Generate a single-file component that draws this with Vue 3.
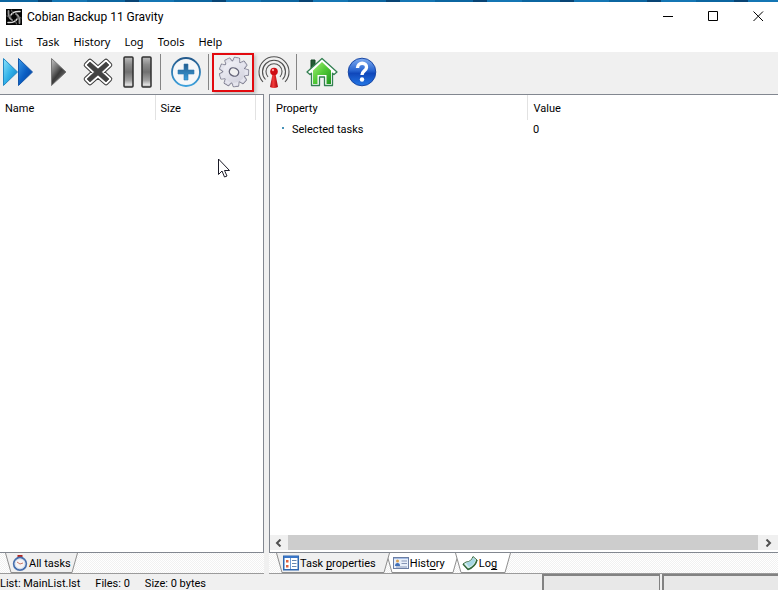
<script setup>
import { ref } from 'vue'

const menus = ['List', 'Task', 'History', 'Log', 'Tools', 'Help']
const detailTab = ref('properties')
const status = ['List: MainList.lst', 'Files: 0', 'Size: 0 bytes']
const gearTeeth = [0, 40, 80, 120, 160, 200, 240, 280, 320]
</script>

<template>
  <main class="window">
    <div class="desktop-edge"></div>
    <header class="titlebar">
      <svg class="app-icon" viewBox="0 0 16 16" aria-hidden="true">
        <rect width="16" height="16" fill="#050505" />
        <g fill="none" stroke-linecap="round">
          <path d="M5 6Q7 2 14 2.500" stroke="#ddd" stroke-width="1.600" />
          <path d="M10 5Q14 7 13.500 14" stroke="#999" stroke-width="1.800" />
          <path d="M11 10Q9 14 2 13.500" stroke="#ddd" stroke-width="1.600" />
          <path d="M6 11Q2 9 2.500 2" stroke="#999" stroke-width="1.800" />
          <path d="M7 5L5.500 1M11 8L15 9M9 11L10.500 15M5 8L1 7" stroke="#777" />
        </g>
      </svg>
      <h1>Cobian Backup 11 Gravity</h1>
      <div class="window-controls">
        <button aria-label="Minimize"><svg viewBox="0 0 12 12"><path d="M1 5.500H11" /></svg></button>
        <button aria-label="Maximize"><svg viewBox="0 0 12 12"><path d="M1.5 .500H10.500V9.500H1.500Z" /></svg></button>
        <button aria-label="Close"><svg viewBox="0 0 12 12"><path d="M1.500 .500L11 10M11 .500L1.500 10" /></svg></button>
      </div>
    </header>

    <nav class="menubar">
      <button v-for="m in menus" :key="m">{{ m }}</button>
    </nav>

    <div class="toolbar" role="toolbar">
      <button class="first" aria-label="Run all tasks">
        <svg viewBox="0 0 32 32">
          <defs>
            <linearGradient id="ffa" x1="0" y1="0" x2="1" y2="1"><stop offset="0" stop-color="#8ce2fb" /><stop offset=".5" stop-color="#31b1e8" /><stop offset="1" stop-color="#0878c0" /></linearGradient>
            <linearGradient id="ffb" x1="0" y1="0" x2="1" y2="1"><stop offset="0" stop-color="#3b9be8" /><stop offset=".5" stop-color="#0b5fc4" /><stop offset="1" stop-color="#063a94" /></linearGradient>
          </defs>
          <path d="M.5 2.500L14.500 16L.5 29.500Z" fill="url(#ffa)" stroke="#2288c4" />
          <path d="M15.500 2.500L29.500 16L15.500 29.500Z" fill="url(#ffb)" stroke="#1557a8" />
        </svg>
      </button>
      <button aria-label="Run selected tasks">
        <svg viewBox="0 0 32 32">
          <defs><linearGradient id="play" x1="0" y1="0" x2=".7" y2="1"><stop offset="0" stop-color="#c8c8c8" /><stop offset=".4" stop-color="#6f6f6f" /><stop offset=".6" stop-color="#3b3b3b" /><stop offset="1" stop-color="#777" /></linearGradient></defs>
          <path d="M9.500 2.500L24 16L9.500 29.500Z" fill="url(#play)" stroke="#777" />
        </svg>
      </button>
      <button aria-label="Abort">
        <svg viewBox="0 0 32 32" fill="none" stroke-linejoin="round">
          <path d="M8 5L16 12L24 5L28 9L20.500 16L28 23L24 27L16 20L8 27L4 23L11.500 16L4 9Z" fill="#3c3c3c" stroke="#3c3c3c" stroke-width="4.600" />
          <path d="M8 5L16 12L24 5L28 9L20.500 16L28 23L24 27L16 20L8 27L4 23L11.500 16L4 9Z" fill="#fff" stroke="#fff" stroke-width="2.600" />
          <path d="M8 6L16 13L24 6L27 9L19.500 16L27 23L24 26L16 19L8 26L5 23L12.500 16L5 9Z" fill="#424242" stroke="#333" stroke-width=".6" />
        </svg>
      </button>
      <button aria-label="Pause">
        <svg viewBox="0 0 32 32">
          <defs><linearGradient id="pause" x1="0" y1="0" x2="0" y2="1"><stop offset="0" stop-color="#bdbdbd" /><stop offset=".25" stop-color="#8b8b8b" /><stop offset=".5" stop-color="#707070" /><stop offset=".78" stop-color="#a0a0a0" /><stop offset=".92" stop-color="#dedede" /><stop offset="1" stop-color="#aaa" /></linearGradient></defs>
          <rect x="2" y="1" width="9" height="30" rx="1" fill="url(#pause)" stroke="#303030" stroke-width="1.500" />
          <rect x="20" y="1" width="9" height="30" rx="1" fill="url(#pause)" stroke="#303030" stroke-width="1.500" />
        </svg>
      </button>
      <span class="separator"></span>
      <button aria-label="New task">
        <svg viewBox="0 0 32 32">
          <defs><linearGradient id="plus" x1="0" y1="0" x2="0" y2="1"><stop offset="0" stop-color="#245a8c" /><stop offset="1" stop-color="#3ba0dc" /></linearGradient></defs>
          <circle cx="16" cy="16" r="14" fill="#f5f7f9" stroke="url(#plus)" stroke-width="1.800" />
          <path d="M14 8H18V14H24V18H18V24H14V18H8V14H14Z" fill="url(#plus)" stroke="#2c78b4" stroke-width=".6" />
        </svg>
      </button>
      <span class="separator"></span>
      <button class="marked" aria-label="Options">
        <svg viewBox="0 0 32 32">
          <defs><linearGradient id="gear" x1="0" y1="0" x2="1" y2="1"><stop offset="0" stop-color="#f4f4fa" /><stop offset="1" stop-color="#cfcfdb" /></linearGradient></defs>
          <g transform="rotate(12 16 16)">
            <g fill="#77778a" stroke="#77778a" stroke-width="2.200" stroke-linejoin="round"><path v-for="a in gearTeeth" :key="a" :transform="`rotate(${a} 16 16)`" d="M12.800 7L13.800 2H18.200L19.200 7Z" /></g>
            <circle cx="16" cy="16" r="11.600" fill="#77778a" />
            <g fill="#e5e5ee" stroke="#e5e5ee" stroke-width=".6" stroke-linejoin="round"><path v-for="a in gearTeeth" :key="a" :transform="`rotate(${a} 16 16)`" d="M12.800 7L13.800 2H18.200L19.200 7Z" /></g>
            <circle cx="16" cy="16" r="10.800" fill="url(#gear)" />
          </g>
          <ellipse cx="16" cy="16" rx="4.800" ry="4" fill="#f1f1f1" stroke="#66667a" stroke-width="1.400" transform="rotate(25 16 16)" />
        </svg>
      </button>
      <button aria-label="Remote control">
        <svg viewBox="0 0 32 32">
          <g fill="none" stroke="#515151" stroke-width="1.100">
            <path d="M5 26A15 15 0 1 1 27 26" /><path d="M7.500 23.500A11.500 11.500 0 1 1 24.500 23.500" /><path d="M10 21A8 8 0 1 1 22 21" />
          </g>
          <defs><linearGradient id="mast"><stop offset="0" stop-color="#a80510" /><stop offset=".4" stop-color="#f43b3b" /><stop offset="1" stop-color="#a80008" /></linearGradient></defs>
          <path d="M14.500 18H17.500L20 31Q16 33 12 31Z" fill="url(#mast)" /><circle cx="16" cy="15.500" r="3.800" fill="#ce0b13" /><circle cx="15" cy="14" r="1.200" fill="#fb9696" />
        </svg>
      </button>
      <span class="separator"></span>
      <button aria-label="Home page">
        <svg viewBox="0 0 32 32">
          <defs><linearGradient id="home" x1="0" y1="0" x2="1" y2="1"><stop offset="0" stop-color="#a6ee78" /><stop offset=".5" stop-color="#51c936" /><stop offset="1" stop-color="#209621" /></linearGradient></defs>
          <path d="M5 4H9V9L5 13Z" fill="#245c35" stroke="#174727" />
          <path d="M16 2.500L31 16L28 18.500L26.500 17.200V29.500H18.500V21H13.500V29.500H5.500V17.200L4 18.500L1 16Z" fill="#fff" stroke="#338052" stroke-width="1.300" stroke-linejoin="round" />
          <path d="M16 6L25 14.500V28H20.500V19H11.500V28H7V14.500Z" fill="url(#home)" />
        </svg>
      </button>
      <button aria-label="Help">
        <svg viewBox="0 0 32 32">
          <defs><linearGradient id="help" x1="0" y1="0" x2="0" y2="1"><stop offset="0" stop-color="#7facf0" /><stop offset=".45" stop-color="#2864d0" /><stop offset=".55" stop-color="#1047ba" /><stop offset="1" stop-color="#2478e6" /></linearGradient></defs>
          <circle cx="16" cy="16" r="13.800" fill="url(#help)" stroke="#1947a4" />
          <path d="M11.500 12C11.500 5.500 21 6 20.500 11.500C20.300 14.800 16 15 16 19" fill="none" stroke="#fff" stroke-width="3.400" /><circle cx="16" cy="23.500" r="2.200" fill="#fff" />
        </svg>
      </button>
    </div>

    <div class="workspace">
      <section class="pane tasks">
        <div class="list">
          <table>
            <thead><tr><th class="name">Name</th><th class="size">Size</th><th></th></tr></thead>
          </table>
          <svg class="pointer" viewBox="0 0 12 20" aria-hidden="true"><path d="M.5 1V16.500L4 13L6.500 19L9 18L6.500 12.500H11.500Z" fill="#fff" stroke="#1b1b28" /></svg>
        </div>
        <div class="tabs" role="tablist">
          <button class="tab active" role="tab" aria-selected="true">
            <svg class="slant" viewBox="0 0 7 20"><path class="fill" d="M0 0H7V20H6Z" /><path class="line" d="M.5 0L6 19.500H7" /></svg>
            <span class="tab-label">
              <svg viewBox="0 0 16 16"><rect x="5.500" y="0" width="5" height="2.500" fill="#b52620" /><circle cx="8" cy="8.800" r="6.300" fill="#fff" stroke="#486fad" stroke-width="1.800" /><circle cx="8" cy="8.800" r="5" fill="#f7f4f4" stroke="#b9cbe5" stroke-width=".7" /><path d="M5 7L8 9L11 8" fill="none" stroke="#c87868" /></svg>
              <span>All tasks</span>
            </span>
            <svg class="slant" viewBox="0 0 7 20"><path class="fill" d="M0 0H7L1 20H0Z" /><path class="line" d="M6.500 0L1 19.500H0" /></svg>
          </button>
        </div>
      </section>

      <div class="splitter"></div>

      <section class="pane details">
        <div class="list">
          <table>
            <thead><tr><th class="property">Property</th><th>Value</th></tr></thead>
            <tbody><tr><td><span class="bullet"></span>Selected tasks</td><td>0</td></tr></tbody>
          </table>
          <div class="scrollbar">
            <button aria-label="Scroll left"><svg viewBox="0 0 8 8"><path d="M5.500 .500L2 4L5.500 7.500" /></svg></button>
            <div class="thumb"></div>
            <button aria-label="Scroll right"><svg viewBox="0 0 8 8"><path d="M2.500 .500L6 4L2.500 7.500" /></svg></button>
          </div>
        </div>
        <div class="tabs" role="tablist">
          <button class="tab" :class="{ active: detailTab === 'properties' }" role="tab" @click="detailTab = 'properties'">
            <svg class="slant" viewBox="0 0 7 20"><path class="fill" d="M0 0H7V20H6Z" /><path class="line" d="M.5 0L6 19.500H7" /></svg>
            <span class="tab-label">
              <svg viewBox="0 0 16 16"><rect x=".75" y="1.250" width="14.500" height="13.500" fill="#fff" stroke="#2e66b0" stroke-width="1.500" /><path d="M1 2H15" stroke="#3975c6" stroke-width="2" /><path d="M7.500 3V14" stroke="#6d9bd3" /><path d="M3 5H5.500V7.500H3ZM3 10H5.500V12.500H3Z" fill="#e0603c" /><path d="M9 5.500H13.500M9 8.500H13.500M9 11.500H13.500" stroke="#6888b0" /></svg>
              <span>Task <u>p</u>roperties</span>
            </span>
            <svg class="slant" viewBox="0 0 7 20"><path class="fill" d="M0 0H7L1 20H0Z" /><path class="line" d="M6.500 0L1 19.500H0" /></svg>
          </button>
          <button class="tab" :class="{ active: detailTab === 'history' }" role="tab" @click="detailTab = 'history'">
            <svg class="slant" viewBox="0 0 7 20"><path class="fill" d="M0 0H7V20H6Z" /><path class="line" d="M.5 0L6 19.500H7" /></svg>
            <span class="tab-label">
              <svg viewBox="0 0 16 16"><rect x=".5" y="2.500" width="15" height="11" fill="#e8effa" stroke="#6c7fa5" /><path d="M1 3.500H15" stroke="#a5bde6" /><circle cx="4.500" cy="6" r="1.500" fill="#dba050" /><path d="M2 11Q2 8 4.500 8T7 11Z" fill="#416fb8" /><path d="M8.500 6H14M8.500 8.500H14M3 12H14" stroke="#8796b7" /></svg>
              <span>Hist<u>o</u>ry</span>
            </span>
            <svg class="slant" viewBox="0 0 7 20"><path class="fill" d="M0 0H7L1 20H0Z" /><path class="line" d="M6.500 0L1 19.500H0" /></svg>
          </button>
          <button class="tab" :class="{ active: detailTab === 'log' }" role="tab" @click="detailTab = 'log'">
            <svg class="slant" viewBox="0 0 7 20"><path class="fill" d="M0 0H7V20H6Z" /><path class="line" d="M.5 0L6 19.500H7" /></svg>
            <span class="tab-label">
              <svg viewBox="0 0 16 16"><path d="M1 9L4 7Q9 7 11 1.500L15 5Q14 11 6 14.500Z" fill="#d7f0ee" stroke="#3e7048" stroke-linejoin="round" /><path d="M4 8Q9 7 11 3L13.500 5Q12 10 7 12Z" fill="#a6d7e4" /><path d="M1 9L6 14.500Q13 12 15 5" fill="none" stroke="#356a3c" stroke-width="1.500" /></svg>
              <span>Lo<u>g</u></span>
            </span>
            <svg class="slant" viewBox="0 0 7 20"><path class="fill" d="M0 0H7L1 20H0Z" /><path class="line" d="M6.500 0L1 19.500H0" /></svg>
          </button>
        </div>
      </section>
    </div>

    <footer class="statusbar">
      <div class="summary"><span v-for="s in status" :key="s">{{ s }}</span></div>
      <div class="progress"></div>
      <div class="progress"></div>
    </footer>
  </main>
</template>

<style>
body { margin: 0; overflow: hidden; }
</style>

<style scoped>
.window { display: flex; flex-direction: column; height: 100vh; background: #f0f0f0; color: #000; font: 11px/14px Roboto, sans-serif; cursor: default; }
button { display: flex; align-items: center; justify-content: center; padding: 0; border: 0; background: none; color: inherit; font: inherit; }
svg { display: block; flex: none; }
.desktop-edge { height: 2px; flex: none; background: repeating-linear-gradient(90deg, #0b65a0 0 38px, #084474 38px 52px, #1476b4 52px 87px); }
.titlebar { display: flex; align-items: center; height: 29px; flex: none; padding-left: 6px; background: #fff; }
.app-icon { width: 16px; height: 16px; }
h1 { flex: 1; margin: 0 0 0 5px; font: 12px/16px Roboto, sans-serif; }
.window-controls { display: flex; gap: 5px; }
.window-controls button { width: 40px; height: 29px; }
.window-controls svg { width: 12px; height: 12px; fill: none; stroke: #000; }
.menubar { display: flex; align-items: center; gap: 14px; height: 21px; flex: none; padding-left: 5px; background: #fff; font-family: "Noto Sans", sans-serif; }
.toolbar { display: flex; align-items: center; box-sizing: border-box; height: 42px; flex: none; padding-bottom: 2px; }
.toolbar button { position: relative; width: 40px; height: 40px; }
.toolbar button.first { width: 38px; }
.toolbar svg { width: 32px; height: 32px; }
.separator { box-sizing: border-box; width: 8px; height: 36px; padding-left: 2px; }
.separator::before { content: ""; display: block; width: 1px; height: 100%; background: #858585; }
.marked::after { content: ""; position: absolute; inset: 1px 0 0 -2px; border: 2px solid #e20a0f; box-shadow: 2px 2px 3px #9998; }
.workspace { display: flex; flex: 1; min-height: 0; }
.pane { display: flex; flex-direction: column; min-width: 0; }
.tasks { width: 264px; flex: none; }
.details { flex: 1; }
.splitter { width: 5px; flex: none; background: #f0f0f0; }
.list { display: flex; flex: 1; flex-direction: column; justify-content: space-between; position: relative; min-height: 0; border: solid #828790; border-width: 1px 1px 1px 0; background: #fff; }
.details .list { border-width: 1px 0 1px 1px; }
table { width: 100%; border-collapse: collapse; table-layout: fixed; }
th, td { box-sizing: border-box; padding: 2px 5px 0; text-align: left; font-weight: normal; white-space: nowrap; }
th { height: 25px; }
td { height: 18px; }
.name, .size, .property { border-right: 1px solid #e2e2e2; }
.name { width: 155px; }
.size { width: 100px; }
.property { width: 257px; }
.details th, .details td { padding-left: 6px; }
.bullet { display: inline-block; width: 2px; height: 2px; margin: 0 8px 4px 6px; background: #4792b8; }
.pointer { position: absolute; left: 218px; top: 63px; width: 12px; height: 20px; }
.scrollbar { display: flex; height: 15px; margin-bottom: 2px; background: #f0f0f0; }
.scrollbar button { width: 18px; }
.scrollbar button:last-child { width: 20px; }
.scrollbar svg { width: 8px; height: 8px; fill: none; stroke: #505050; stroke-width: 2px; }
.thumb { flex: 1; background: #cdcdcd; }
.tabs { display: flex; align-items: flex-start; height: 20px; flex: none; padding-left: 5px; border-bottom: 1px solid #9b9b9b; background: repeating-conic-gradient(#f1f1f1 0 25%, #fff 0 50%) 0 0 / 2px 2px; }
.details .tabs { padding-left: 7px; }
.tab { height: 20px; --face: #fff; }
.tab + .tab { margin-left: -4px; }
.tab.active { --face: #f0f0f0; position: relative; }
.slant { width: 7px; height: 20px; }
.fill { fill: var(--face); }
.line { fill: none; stroke: #8e8e8e; }
.tab-label { display: flex; align-items: center; box-sizing: border-box; height: 20px; gap: 1px; border-bottom: 1px solid #8e8e8e; background: var(--face); white-space: nowrap; }
.details .tab-label { padding-right: 7px; }
.tab-label span { padding-top: 2px; }
.tab-label svg { width: 16px; height: 16px; }
u { text-underline-offset: 2px; text-decoration-skip-ink: none; }
.statusbar { display: flex; height: 16px; flex: none; gap: 2px; }
.summary { display: flex; flex: 1; align-items: center; gap: 15px; padding-top: 4px; white-space: nowrap; }
.progress { box-sizing: border-box; width: 118px; border: solid #828282; border-width: 2px 1px 0 2px; background: #e8e8e8; }
.progress:last-child { width: 116px; border-right: 0; }
</style>
